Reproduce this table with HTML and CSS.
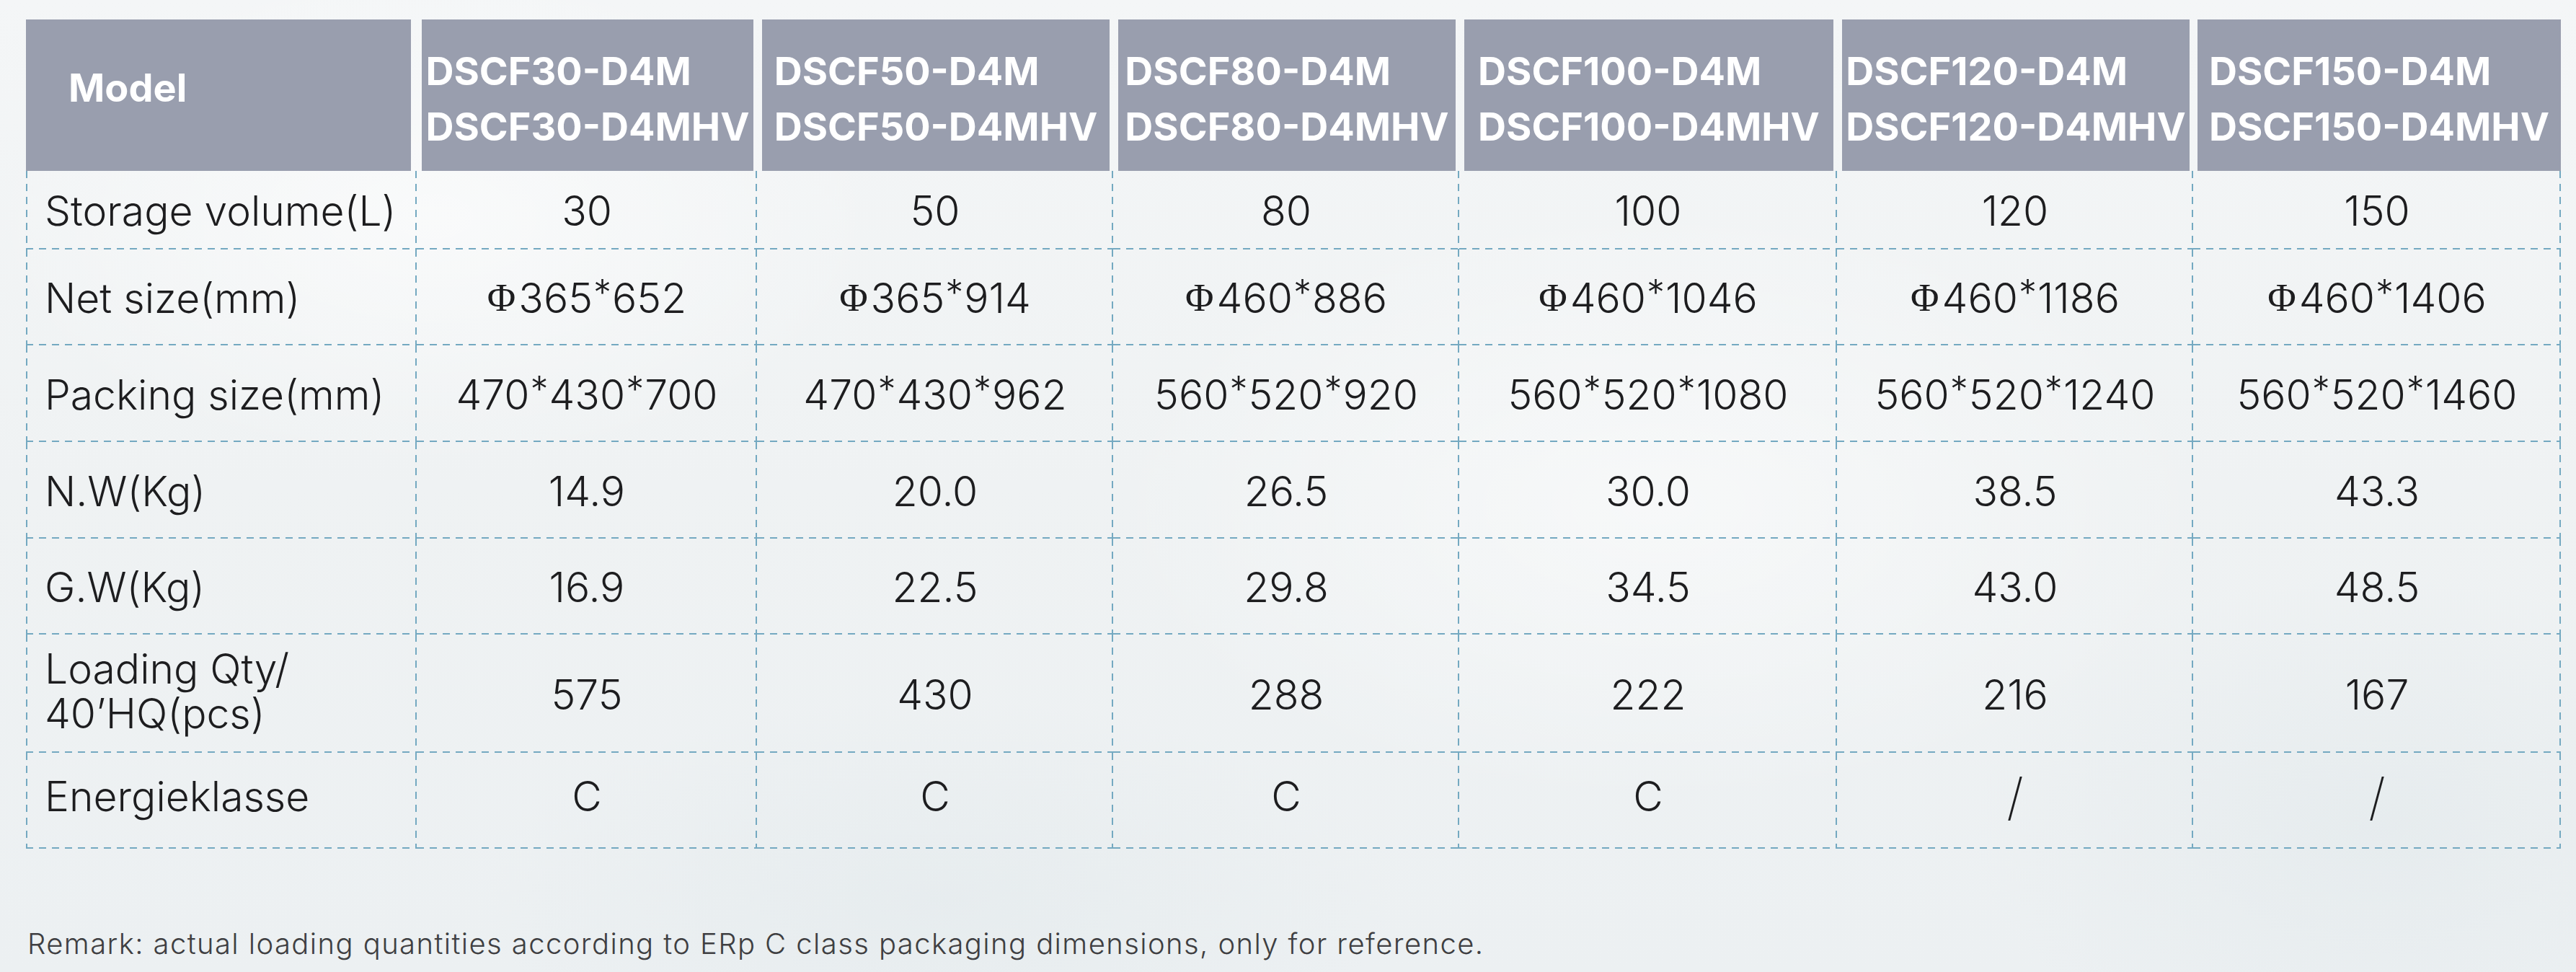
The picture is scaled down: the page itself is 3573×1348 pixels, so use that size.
FILE: index.html
```html
<!DOCTYPE html>
<html lang="en">
<head>
<meta charset="utf-8">
<title>Specifications</title>
<link rel="stylesheet" href="styles.css">
</head>
<body>
<main class="page">
  <div class="spec">
    <div class="hd hd-first"><span class="hd-model">Model</span></div>
    <div class="hd"><div class="hd-text">DSCF30-D4M<br>DSCF30-D4MHV</div></div>
    <div class="hd"><div class="hd-text">DSCF50-D4M<br>DSCF50-D4MHV</div></div>
    <div class="hd"><div class="hd-text">DSCF80-D4M<br>DSCF80-D4MHV</div></div>
    <div class="hd"><div class="hd-text">DSCF100-D4M<br>DSCF100-D4MHV</div></div>
    <div class="hd"><div class="hd-text">DSCF120-D4M<br>DSCF120-D4MHV</div></div>
    <div class="hd hd-last"><div class="hd-text">DSCF150-D4M<br>DSCF150-D4MHV</div></div>

    <div class="cell label">Storage volume(L)</div>
    <div class="cell">30</div>
    <div class="cell">50</div>
    <div class="cell">80</div>
    <div class="cell">100</div>
    <div class="cell">120</div>
    <div class="cell">150</div>

    <div class="cell label">Net size(mm)</div>
    <div class="cell"><span class="phi">Φ</span>365<span class="ast">*</span>652</div>
    <div class="cell"><span class="phi">Φ</span>365<span class="ast">*</span>914</div>
    <div class="cell"><span class="phi">Φ</span>460<span class="ast">*</span>886</div>
    <div class="cell"><span class="phi">Φ</span>460<span class="ast">*</span>1046</div>
    <div class="cell"><span class="phi">Φ</span>460<span class="ast">*</span>1186</div>
    <div class="cell"><span class="phi">Φ</span>460<span class="ast">*</span>1406</div>

    <div class="cell label">Packing size(mm)</div>
    <div class="cell">470<span class="ast">*</span>430<span class="ast">*</span>700</div>
    <div class="cell">470<span class="ast">*</span>430<span class="ast">*</span>962</div>
    <div class="cell">560<span class="ast">*</span>520<span class="ast">*</span>920</div>
    <div class="cell">560<span class="ast">*</span>520<span class="ast">*</span>1080</div>
    <div class="cell">560<span class="ast">*</span>520<span class="ast">*</span>1240</div>
    <div class="cell">560<span class="ast">*</span>520<span class="ast">*</span>1460</div>

    <div class="cell label">N.W(Kg)</div>
    <div class="cell">14.9</div>
    <div class="cell">20.0</div>
    <div class="cell">26.5</div>
    <div class="cell">30.0</div>
    <div class="cell">38.5</div>
    <div class="cell">43.3</div>

    <div class="cell label">G.W(Kg)</div>
    <div class="cell">16.9</div>
    <div class="cell">22.5</div>
    <div class="cell">29.8</div>
    <div class="cell">34.5</div>
    <div class="cell">43.0</div>
    <div class="cell">48.5</div>

    <div class="cell label label-2"><div class="label-lines"><span class="line">Loading Qty/</span><span class="line">40’HQ(pcs)</span></div></div>
    <div class="cell">575</div>
    <div class="cell">430</div>
    <div class="cell">288</div>
    <div class="cell">222</div>
    <div class="cell">216</div>
    <div class="cell">167</div>

    <div class="cell label last">Energieklasse</div>
    <div class="cell last">C</div>
    <div class="cell last">C</div>
    <div class="cell last">C</div>
    <div class="cell last">C</div>
    <div class="cell last"><span class="slash">/</span></div>
    <div class="cell last"><span class="slash">/</span></div>
  </div>
  <p class="remark">Remark: actual loading quantities according to ERp C class packaging dimensions, only for reference.</p>
</main>
</body>
</html>
```

FILE: styles.css
```css
html, body {
  margin: 0;
  padding: 0;
}

body {
  width: 3573px;
  height: 1348px;
  overflow: hidden;
  font-family: Inter, "Open Sans", "Liberation Sans", sans-serif;
  color: #1d1d1f;
  background-color: #eff2f3;
  background-image:
    radial-gradient(ellipse 900px 500px at 600px 300px, rgba(255,255,255,0.55), rgba(255,255,255,0) 70%),
    radial-gradient(ellipse 1100px 600px at 2300px 700px, rgba(255,255,255,0.5), rgba(255,255,255,0) 70%),
    radial-gradient(ellipse 900px 400px at 1300px 1250px, rgba(220,229,232,0.35), rgba(220,229,232,0) 70%),
    radial-gradient(ellipse 800px 500px at 3300px 1150px, rgba(222,230,233,0.45), rgba(222,230,233,0) 70%),
    linear-gradient(180deg, #f4f6f7 0%, #eff2f3 50%, #ecf0f2 100%);
}

.page {
  padding: 27px 0 0 36px;
}

.spec {
  display: grid;
  grid-template-columns: 542px 472px 494px 480px 524px 494px 510px;
  grid-template-rows: 210px 109px 133px 134px 134px 133px 164px 133px;
  width: 3516px;
}

.hd {
  background: #999eae;
  color: #ffffff;
  font-weight: 700;
  font-size: 54px;
  margin: 0 5px 0 7px;
  display: flex;
  align-items: center;
  justify-content: center;
}

.hd-first {
  margin: 0 8px 0 0;
  justify-content: flex-start;
  padding: 0 0 20px 59px;
}

.hd-last {
  margin: 0 0 0 6px;
}

.hd-text {
  line-height: 77px;
  text-align: left;
  padding-top: 10px;
  white-space: nowrap;
}

.hd-model {
  line-height: 1;
}

.cell {
  --dash: #74a9c1;
  display: flex;
  align-items: center;
  justify-content: center;
  font-weight: 270;
  font-size: 57px;
  line-height: 57px;
  white-space: nowrap;
  padding-top: 2px;
  box-sizing: border-box;
  background-image:
    repeating-linear-gradient(90deg, var(--dash) 0 10px, transparent 10px 18px),
    repeating-linear-gradient(180deg, var(--dash) 0 10px, transparent 10px 18px);
  background-size: 100% 2px, 2px 100%;
  background-position: left bottom, right top;
  background-repeat: no-repeat;
}

.label {
  justify-content: flex-start;
  padding-left: 26px;
  background-image:
    repeating-linear-gradient(90deg, var(--dash) 0 10px, transparent 10px 18px),
    repeating-linear-gradient(180deg, var(--dash) 0 10px, transparent 10px 18px),
    repeating-linear-gradient(180deg, var(--dash) 0 10px, transparent 10px 18px);
  background-size: 100% 2px, 2px 100%, 2px 100%;
  background-position: left bottom, right top, left top;
}

.label-2 {
  padding-top: 0;
  padding-bottom: 6px;
}

.label-lines {
  display: flex;
  flex-direction: column;
  gap: 0;
}

.line {
  display: block;
  line-height: 62px;
}

.last {
  padding-top: 0;
  padding-bottom: 12px;
}

.phi {
  font-family: "Liberation Serif", "DejaVu Serif", serif;
  font-weight: 400;
  font-size: 54px;
  margin-right: 4px;
}

.ast {
  display: inline-block;
  font-size: 50px;
  transform: translateY(-7px);
  margin: 0 1px;
}

.slash {
  display: inline-block;
  font-size: 70px;
  font-weight: 200;
}

.remark {
  margin: 108px 0 0 2px;
  font-weight: 300;
  font-size: 40px;
  line-height: 48px;
  letter-spacing: 1.4px;
  color: #3f3f42;
  white-space: nowrap;
}
```
